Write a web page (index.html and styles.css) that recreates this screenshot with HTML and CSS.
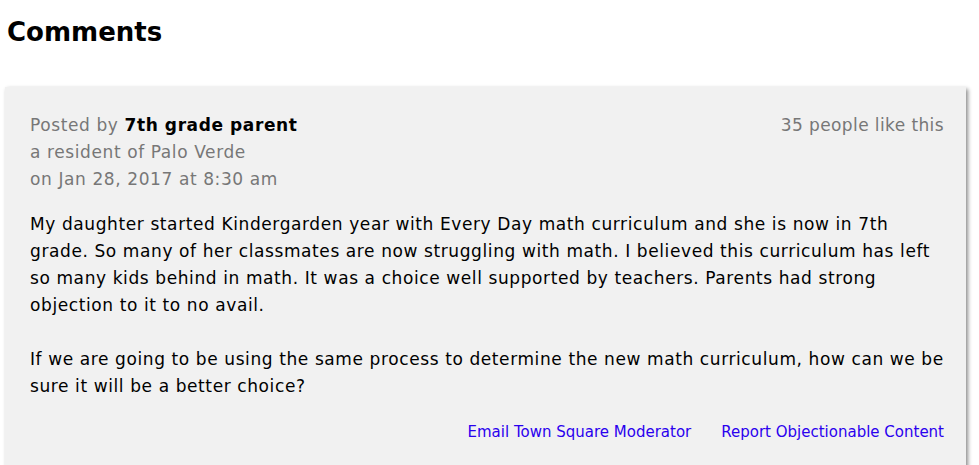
FILE: index.html
```html
<!DOCTYPE html>
<html>
<head>
<meta charset="utf-8">
<link rel="stylesheet" href="styles.css">
</head>
<body>
<h2 class="title">Comments</h2>
<div class="card">
  <div class="head">
    <div class="meta">
      <div>Posted by <strong class="author">7th grade parent</strong></div>
      <div>a resident of Palo Verde</div>
      <div>on Jan 28, 2017 at 8:30 am</div>
    </div>
    <div class="likes">35 people like this</div>
  </div>
  <div class="body">
    <p>My daughter started Kindergarden year with Every Day math curriculum and she is now in 7th grade. So many of her classmates are now struggling with math. I believed this curriculum has left so many kids behind in math. It was a choice well supported by teachers. Parents had strong objection to it to no avail.</p>
    <p>If we are going to be using the same process to determine the new math curriculum, how can we be sure it will be a better choice?</p>
  </div>
  <div class="links">
    <a href="#">Email Town Square Moderator</a>
    <a href="#">Report Objectionable Content</a>
  </div>
</div>
</body>
</html>
```
FILE: styles.css
```css
html, body {
  margin: 0;
  padding: 0;
  background: #fff;
  font-family: "DejaVu Sans", Verdana, sans-serif;
}
.title {
  margin: 0;
  padding: 16px 0 0 7px;
  font-size: 26px;
  line-height: 32px;
  font-weight: bold;
  color: #000;
  height: 73px;
  box-sizing: border-box;
}
.card {
  margin: 14px 13px 0 5px;
  background: #f1f1f1;
  box-shadow: 2px 2px 4px rgba(0,0,0,0.45);
  padding: 25px 22px 30px 25px;
  font-size: 17px;
  letter-spacing: 0.6px;
  line-height: 27px;
}
.head {
  display: flex;
  justify-content: space-between;
  color: #777;
}
.likes {
  letter-spacing: 0.4px;
}
.author {
  color: #000;
}
.body {
  margin-top: 18px;
  color: #000;
}
.body p {
  margin: 0 0 27px;
}
.body p:last-child {
  margin-bottom: 0;
}
.links {
  display: flex;
  justify-content: flex-end;
  gap: 30px;
  margin-top: 22px;
  font-size: 15px;
  letter-spacing: 0;
  line-height: 20px;
}
.links a {
  color: #2a00ee;
  text-decoration: none;
}
```
